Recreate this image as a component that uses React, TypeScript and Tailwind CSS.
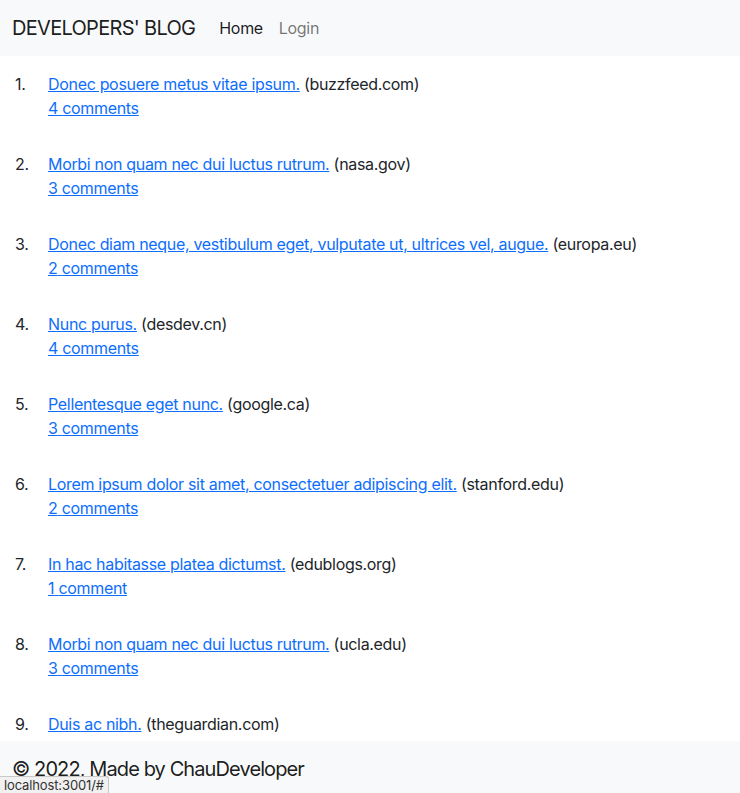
const posts = [
  { id: 1, title: "Donec posuere metus vitae ipsum.", site: "buzzfeed.com", comments: 4 },
  { id: 2, title: "Morbi non quam nec dui luctus rutrum.", site: "nasa.gov", comments: 3 },
  { id: 3, title: "Donec diam neque, vestibulum eget, vulputate ut, ultrices vel, augue.", site: "europa.eu", comments: 2 },
  { id: 4, title: "Nunc purus.", site: "desdev.cn", comments: 4 },
  { id: 5, title: "Pellentesque eget nunc.", site: "google.ca", comments: 3 },
  { id: 6, title: "Lorem ipsum dolor sit amet, consectetuer adipiscing elit.", site: "stanford.edu", comments: 2 },
  { id: 7, title: "In hac habitasse platea dictumst.", site: "edublogs.org", comments: 1 },
  { id: 8, title: "Morbi non quam nec dui luctus rutrum.", site: "ucla.edu", comments: 3 },
  { id: 9, title: "Duis ac nibh.", site: "theguardian.com", comments: 2 },
];

const PostItem = ({ post }: { post: (typeof posts)[number] }) => (
  <li className="mb-8 flex">
    <span className="w-[33px] shrink-0">{post.id}.</span>
    <div>
      <a href="#" className="text-[#0d6efd] underline">
        {post.title}
      </a>{" "}
      ({post.site})
      <br />
      <a href="#" className="text-[#0d6efd] underline">
        {post.comments} {post.comments === 1 ? "comment" : "comments"}
      </a>
    </div>
  </li>
);

export default function App() {
  return (
    <div className="relative h-[793px] overflow-hidden bg-white font-['Inter',sans-serif] text-base leading-6 tracking-[-0.02em] text-[#212529]">
      <nav className="flex h-14 items-center bg-[#f8f9fa] px-3">
        <a href="#" className="mr-4 text-xl leading-[30px] tracking-[-0.035em] text-black/90">
          DEVELOPERS' BLOG
        </a>
        <div className="flex">
          <a href="#" className="px-2 text-black/90">
            Home
          </a>
          <a href="#" className="px-2 text-black/55">
            Login
          </a>
        </div>
      </nav>

      <ol className="mt-4 pl-[15px]">
        {posts.map((post) => (
          <PostItem key={post.id} post={post} />
        ))}
      </ol>

      <footer className="absolute inset-x-0 top-[741px] h-14 bg-[#f8f9fa] px-3 pt-[13px] text-xl leading-[30px] tracking-[-0.045em] text-black/90">
        © 2022, Made by ChauDeveloper
      </footer>

      <div className="absolute bottom-0 left-0 rounded-tr-[3px] border border-b-0 border-l-0 border-[#c8c8c8] bg-[#f1f1f1] px-1 text-[13px] leading-4 tracking-[-0.01em] text-[#333]">
        localhost:3001/#
      </div>
    </div>
  );
}
